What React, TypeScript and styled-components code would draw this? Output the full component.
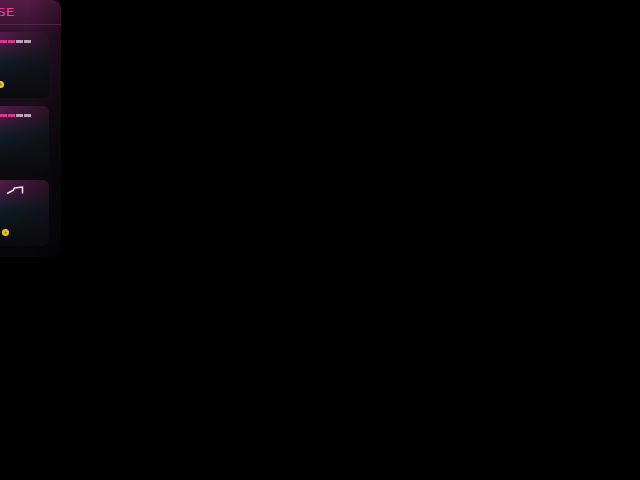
import React from "react";
import styled, { createGlobalStyle } from "styled-components";

const GlobalStyle = createGlobalStyle`
  html, body {
    margin: 0;
    height: 100%;
    background: #000;
    overflow: hidden;
  }
`;

const Panel = styled.section`
  box-sizing: border-box;
  width: 221px;
  height: 257px;
  margin-left: -160px;
  border-radius: 8px;
  background:
    linear-gradient(90deg, rgba(0, 0, 0, 0) 85%, rgba(0, 0, 0, 0.35) 100%),
    linear-gradient(180deg, #561c48 0%, #2d1229 14%, #110c12 50%, #060507 100%);
  overflow: hidden;
`;

const Header = styled.header`
  box-sizing: border-box;
  height: 25px;
  padding-right: 47px;
  border-bottom: 1px solid rgba(255, 120, 200, 0.18);
  display: flex;
  align-items: center;
  justify-content: flex-end;
`;

const Title = styled.h2`
  margin: 0;
  color: #e8409c;
  font: 400 11px "DejaVu Sans", sans-serif;
  letter-spacing: 0;
  transform: scaleX(1.25);
  transform-origin: right center;
`;

const CardList = styled.div`
  padding: 7px 12px 0 12px;
  display: flex;
  flex-direction: column;
  gap: 8px;
`;

const Card = styled.article`
  height: 66px;
  border-radius: 6px;
  background:
    linear-gradient(90deg, rgba(14, 10, 14, 0) 72%, rgba(14, 10, 14, 0.6) 100%),
    linear-gradient(180deg, #541d4a 0%, #4a1a43 18%, #2a2036 30%, #0f1d26 46%, #0a090c 100%);
  overflow: hidden;
  position: relative;
`;

const CardHead = styled.div`
  box-sizing: border-box;
  height: 19px;
  padding-left: 132px;
  display: flex;
  align-items: center;
  gap: 1px;
`;

const Dash = styled.span<{ $on: boolean }>`
  width: 7px;
  height: 3px;
  background: ${(p) => (p.$on ? "#d23a8f" : "#b5a6b2")};
`;

const Knob = styled.span<{ $left: number }>`
  position: absolute;
  left: ${(p) => p.$left}px;
  top: 49px;
  width: 7px;
  height: 7px;
  border-radius: 50%;
  background: radial-gradient(circle, #8a7410 0 0.6px, #e8c818 1.5px);
`;

const Ramp = styled.svg`
  display: block;
  margin-left: 22px;
`;

const Pattern = () => (
  <>
    {[true, true, true, true, false, false].map((on, i) => (
      <Dash key={i} $on={on} />
    ))}
  </>
);

export default function App() {
  return (
    <>
      <GlobalStyle />
      <Panel>
        <Header>
          <Title>PHASE</Title>
        </Header>
        <CardList>
          <Card>
            <CardHead>
              <Pattern />
            </CardHead>
            <Knob $left={145} />
          </Card>
          <Card>
            <CardHead>
              <Pattern />
            </CardHead>
          </Card>
          <Card>
            <CardHead>
              <Ramp width="18" height="10" viewBox="0 0 18 10" fill="none">
                <path d="M1 8.5 L7 5.5 L8.5 3 L16.5 2 L16.5 8.5" stroke="#f2e6ee" strokeWidth="1.5" />
              </Ramp>
            </CardHead>
            <Knob $left={150} />
          </Card>
        </CardList>
      </Panel>
    </>
  );
}
